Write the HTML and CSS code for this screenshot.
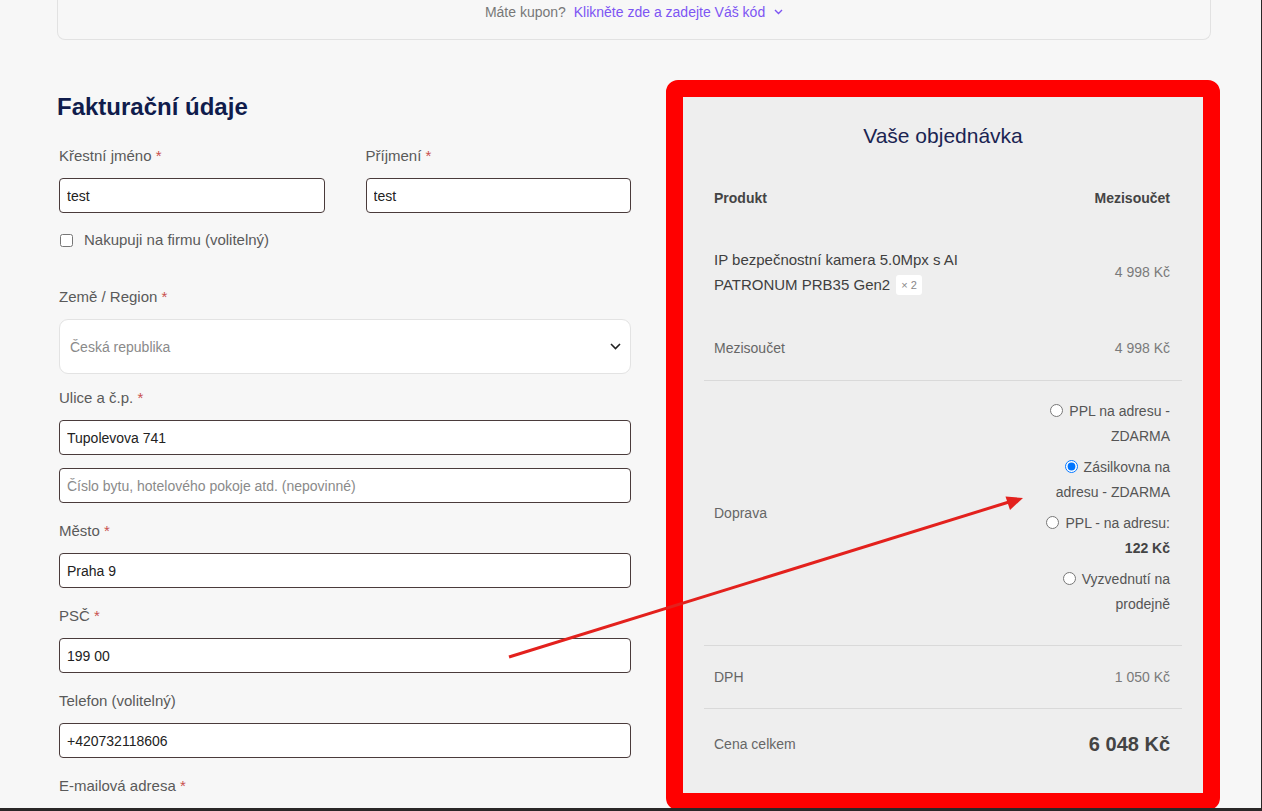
FILE: index.html
```html
<!DOCTYPE html>
<html lang="cs">

<head>
    <meta charset="UTF-8">
    <meta name="viewport" content="width=device-width, initial-scale=1.0">
    <title>Pokladna</title>
    <link rel="stylesheet" href="styles.css">
</head>

<body>
    <div class="stranka">
        <div class="kupon">
            Máte kupon? <a href="#" class="kupon-odkaz">Klikněte zde a zadejte Váš kód</a>
            <svg class="kupon-sipka" width="9" height="6" viewBox="0 0 9 6"><path d="M1 1l3.5 3.5L8 1" fill="none" stroke="#7d55f3" stroke-width="1.4"/></svg>
        </div>

        <div class="pokladna">
            <div class="fakturace">
                <h2 class="nadpis">Fakturační údaje</h2>

                <div class="dvojice">
                    <div class="pole">
                        <label class="popisek">Křestní jméno <span class="hvezda">*</span></label>
                        <input class="vstup" type="text" value="test">
                    </div>
                    <div class="pole">
                        <label class="popisek">Příjmení <span class="hvezda">*</span></label>
                        <input class="vstup" type="text" value="test">
                    </div>
                </div>

                <label class="firma">
                    <input type="checkbox" class="zaskrtavatko">
                    <span>Nakupuji na firmu (volitelný)</span>
                </label>

                <div class="pole pole-zeme">
                    <label class="popisek">Země / Region <span class="hvezda">*</span></label>
                    <div class="vyber">
                        <span>Česká republika</span>
                        <svg width="11" height="7" viewBox="0 0 11 7"><path d="M1 1l4.5 4.5L10 1" fill="none" stroke="#222" stroke-width="1.6"/></svg>
                    </div>
                </div>

                <div class="pole">
                    <label class="popisek">Ulice a č.p. <span class="hvezda">*</span></label>
                    <input class="vstup" type="text" value="Tupolevova 741">
                    <input class="vstup vstup-dalsi" type="text" placeholder="Číslo bytu, hotelového pokoje atd. (nepovinné)">
                </div>

                <div class="pole">
                    <label class="popisek">Město <span class="hvezda">*</span></label>
                    <input class="vstup" type="text" value="Praha 9">
                </div>

                <div class="pole">
                    <label class="popisek">PSČ <span class="hvezda">*</span></label>
                    <input class="vstup" type="text" value="199 00">
                </div>

                <div class="pole">
                    <label class="popisek">Telefon (volitelný)</label>
                    <input class="vstup" type="text" value="+420732118606">
                </div>

                <div class="pole">
                    <label class="popisek">E-mailová adresa <span class="hvezda">*</span></label>
                    <input class="vstup" type="text" value="">
                </div>
            </div>

            <div class="objednavka">
                <h3 class="objednavka-nadpis">Vaše objednávka</h3>

                <table class="souhrn">
                    <thead>
                        <tr class="radek-hlavicka">
                            <th>Produkt</th>
                            <th class="vpravo">Mezisoučet</th>
                        </tr>
                    </thead>
                    <tbody>
                        <tr class="radek-produkt">
                            <td class="produkt">IP bezpečnostní kamera 5.0Mpx s AI<br>PATRONUM PRB35 Gen2 <span class="pocet">× 2</span></td>
                            <td class="vpravo cena">4 998 Kč</td>
                        </tr>
                        <tr class="radek">
                            <td>Mezisoučet</td>
                            <td class="vpravo cena">4 998 Kč</td>
                        </tr>
                        <tr class="radek radek-doprava">
                            <td>Doprava</td>
                            <td class="vpravo">
                                <ul class="doprava">
                                    <li><input type="radio" name="doprava">PPL na adresu -<br>ZDARMA</li>
                                    <li><input type="radio" name="doprava" checked>Zásilkovna na<br>adresu - ZDARMA</li>
                                    <li><input type="radio" name="doprava">PPL - na adresu:<br><b>122 Kč</b></li>
                                    <li><input type="radio" name="doprava">Vyzvednutí na<br>prodejně</li>
                                </ul>
                            </td>
                        </tr>
                        <tr class="radek radek-cara">
                            <td>DPH</td>
                            <td class="vpravo cena">1 050 Kč</td>
                        </tr>
                        <tr class="radek radek-cara radek-celkem">
                            <td>Cena celkem</td>
                            <td class="vpravo celkem">6 048 Kč</td>
                        </tr>
                    </tbody>
                </table>
            </div>
        </div>

        <svg class="sipka" width="1261" height="808" viewBox="0 0 1261 808">
            <line x1="509" y1="657" x2="1009" y2="502" stroke="#e3211d" stroke-width="3"/>
            <polygon points="1023,498 1005.5,496.5 1010,510" fill="#e3211d"/>
        </svg>
    </div>
</body>
</html>
```

FILE: styles.css
```css
html {
    background-color: #2a2727;
}

body {
    margin: 0;
    font-family: "Liberation Sans", Arial, sans-serif;
    color: #5a5a5a;
}

.stranka {
    position: relative;
    width: 1261px;
    height: 808px;
    overflow: hidden;
    background-color: #f7f7f7;
}

.kupon {
    margin-left: 57px;
    width: 1154px;
    height: 40px;
    box-sizing: border-box;
    border: 1px solid #e2e2e2;
    border-top: 0;
    border-radius: 0 0 8px 8px;
    text-align: center;
    font-size: 14px;
    line-height: 24px;
    color: #777;
}

.kupon-odkaz {
    color: #7d55f3;
    text-decoration: none;
    margin-left: 4px;
}

.kupon-sipka {
    margin-left: 5px;
    vertical-align: 2px;
}

.pokladna {
    display: flex;
    align-items: flex-start;
    margin-top: 40px;
    margin-left: 59px;
}

.fakturace {
    width: 572px;
    padding-top: 10px;
}

.nadpis {
    margin: 0 0 21px -2px;
    font-size: 24px;
    line-height: 34px;
    font-weight: bold;
    color: #101c4c;
}

.dvojice {
    display: grid;
    grid-template-columns: 1fr 1fr;
    gap: 41px;
}

.dvojice .pole {
    margin-bottom: 0;
}

.pole {
    margin-bottom: 17px;
}

.popisek {
    display: block;
    font-size: 15px;
    line-height: 22px;
    margin-bottom: 11px;
    color: #5a5a5a;
}

.hvezda {
    color: #c9504d;
}

.vstup {
    display: block;
    width: 100%;
    height: 35px;
    box-sizing: border-box;
    border: 1px solid #4a3b3b;
    border-radius: 4px;
    background: #fff;
    padding: 0 7px;
    font-family: "Liberation Sans", Arial, sans-serif;
    font-size: 14px;
    color: #222;
}

.vstup::placeholder {
    color: #8a8a8a;
}

.vstup-dalsi {
    margin-top: 13px;
}

.firma {
    display: flex;
    align-items: center;
    margin-top: 16px;
    margin-bottom: 35px;
    font-size: 15px;
    line-height: 22px;
}

.zaskrtavatko {
    width: 13px;
    height: 13px;
    margin: 0 11px 0 1px;
}

.pole-zeme {
    margin-bottom: 13px;
}

.vyber {
    display: flex;
    align-items: center;
    justify-content: space-between;
    height: 55px;
    box-sizing: border-box;
    padding: 0 9px 0 10px;
    background: #fff;
    border: 1px solid #e3e3e3;
    border-radius: 9px;
    font-size: 14px;
    color: #8a8a8a;
}

.objednavka {
    width: 554px;
    margin-left: 35px;
    box-sizing: border-box;
    border: 17px solid #ff0000;
    border-radius: 12px;
    background-color: #eeeeee;
    padding: 23px 21px 14px;
}

.objednavka-nadpis {
    margin: 0 0 17px;
    text-align: center;
    font-size: 21px;
    line-height: 32px;
    font-weight: normal;
    color: #1a2452;
}

.souhrn {
    width: 100%;
    border-collapse: collapse;
    font-size: 14px;
}

.souhrn th,
.souhrn td {
    padding: 20px 10px;
    text-align: left;
    line-height: 24px;
    color: #666;
}

.souhrn th.vpravo,
.souhrn td.vpravo {
    text-align: right;
    padding-right: 12px;
}

.radek-hlavicka th {
    padding-top: 18px;
    padding-bottom: 18px;
    line-height: 22px;
    font-weight: bold;
    color: #444;
}

.radek-produkt td {
    padding-bottom: 19px;
}

.produkt {
    font-size: 15px;
    line-height: 25px !important;
    color: #3f3f3f !important;
}

.pocet {
    display: inline-block;
    margin-left: 2px;
    padding: 0 5px;
    background: #fff;
    border-radius: 3px;
    font-size: 11px;
    line-height: 20px;
    color: #888;
    vertical-align: 1px;
}

.cena {
    color: #7a7a7a !important;
}

.radek-doprava td {
    border-top: 1px solid #d9d9d9;
    padding-top: 18px;
    padding-bottom: 18px;
}

.radek-cara td {
    border-top: 1px solid #d9d9d9;
    line-height: 22px;
}

.radek-celkem td {
    line-height: 30px;
}

.celkem {
    font-size: 20px;
    font-weight: bold;
    color: #444 !important;
}

.doprava {
    list-style: none;
    margin: 0 0 10px;
    padding: 0;
    white-space: nowrap;
    color: #555;
}

.doprava li {
    line-height: 25px;
    margin-bottom: 6px;
}

.doprava li:last-child {
    margin-bottom: 0;
}

.doprava input {
    width: 13px;
    height: 13px;
    margin: 0 6px 0 0;
    vertical-align: -1px;
}

.doprava b {
    color: #444;
}

.sipka {
    position: absolute;
    left: 0;
    top: 0;
    pointer-events: none;
}
```
